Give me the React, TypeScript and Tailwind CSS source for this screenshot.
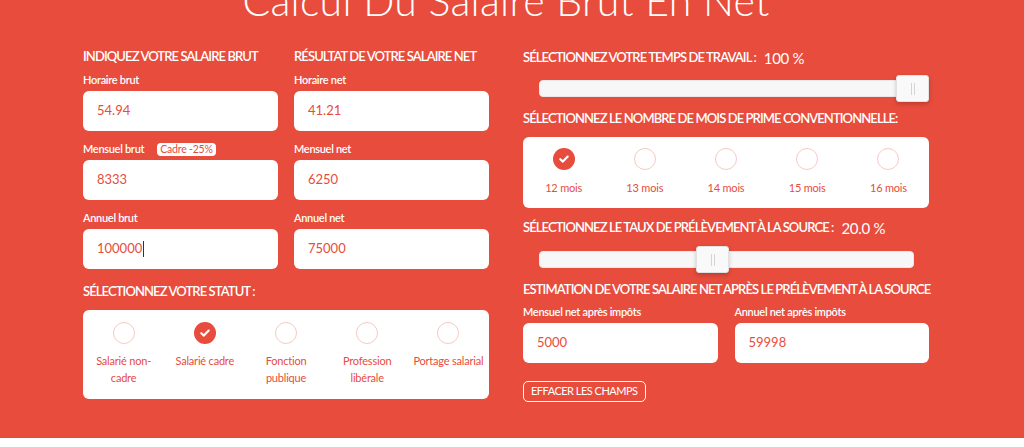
import React from 'react';

const font = { fontFamily: 'Lato, "Noto Sans", sans-serif' };

function Check() {
  return (
    <div className="w-[22px] h-[22px] rounded-full bg-[#e74c3c] flex items-center justify-center">
      <svg width="12" height="12" viewBox="0 0 12 12" fill="none">
        <path d="M2.3 6.2 L4.9 8.6 L9.7 3.6" stroke="white" strokeWidth="2.2" strokeLinecap="round" strokeLinejoin="round" />
      </svg>
    </div>
  );
}

function Circle() {
  return <div className="w-[22px] h-[22px] rounded-full border-[1.5px] border-[#f7cac3] bg-white" />;
}

function Field({ label, value, badge, caret }: { label: string; value: string; badge?: string; caret?: boolean }) {
  return (
    <div className="flex flex-col">
      <div className="h-[18px] flex items-center text-[11px] font-semibold text-white tracking-[-0.3px]">
        {label}
        {badge && (
          <span className="ml-[13px] bg-white text-[#e74c3c] rounded-[4px] px-[3px] h-[13px] leading-[13px] text-[10.5px] font-normal tracking-[-0.2px]">
            {badge}
          </span>
        )}
      </div>
      <div className="mt-[2px] h-[40px] bg-white rounded-[6px] flex items-center pl-[14px] text-[13px] text-[#e74c3c]">
        {value}
        {caret && <span className="w-px h-[16px] bg-[#333] ml-[1px]" />}
      </div>
    </div>
  );
}

function Heading({ children, className = '' }: { children: React.ReactNode; className?: string }) {
  return (
    <div className={`h-[20px] flex items-center text-[13px] font-semibold text-white uppercase tracking-[-0.9px] whitespace-nowrap ${className}`}>
      {children}
    </div>
  );
}

function Slider({ left }: { left: number }) {
  return (
    <div className="relative h-[27px] mr-[15px] ml-[16px]">
      <div className="absolute left-0 right-0 top-[5px] h-[17px] bg-[#f7f7f7] rounded-[4px] border border-[#e9e9e9]" />
      <div
        className="absolute top-0 w-[33px] h-[27px] bg-[#f9f9f9] rounded-[3px] border border-[#e2e2e2] shadow-[0_2px_4px_rgba(0,0,0,0.2)] flex items-center justify-center gap-[2px]"
        style={{ left }}
      >
        <span className="w-px h-[12px] bg-[#d4d4d4]" />
        <span className="w-px h-[12px] bg-[#d4d4d4]" />
      </div>
    </div>
  );
}

const statuts = [
  { label: 'Salarié non-\ncadre', on: false },
  { label: 'Salarié cadre', on: true },
  { label: 'Fonction\npublique', on: false },
  { label: 'Profession\nlibérale', on: false },
  { label: 'Portage salarial', on: false },
];

const mois = ['12 mois', '13 mois', '14 mois', '15 mois', '16 mois'];

export default function App() {
  return (
    <div style={font} className="w-[1024px] h-[447px] bg-white overflow-hidden">
      <div className="h-[438px] bg-[#e74c3c] flex flex-col items-center">
        {/* Title */}
        <h1 className="mt-[-20px] h-[41px] leading-[41px] text-[41px] font-light text-white tracking-[0.3px] ml-[-12px] whitespace-nowrap">
          Calcul Du Salaire Brut En Net
        </h1>

        <div className="mt-[26px] flex gap-[34px] ml-[-12px]">
          {/* Left column */}
          <div className="w-[406px] flex flex-col">
            <div className="grid grid-cols-2 gap-x-[16px]">
              <Heading>Indiquez votre salaire brut</Heading>
              <Heading>Résultat de votre salaire net</Heading>
            </div>
            <div className="mt-[4px] grid grid-cols-2 gap-x-[16px] gap-y-[9px]">
              <Field label="Horaire brut" value="54.94" />
              <Field label="Horaire net" value="41.21" />
              <Field label="Mensuel brut" value="8333" badge="Cadre -25%" />
              <Field label="Mensuel net" value="6250" />
              <Field label="Annuel brut" value="100000" caret />
              <Field label="Annuel net" value="75000" />
            </div>
            <Heading className="mt-[13px]">Sélectionnez votre statut :</Heading>
            <div className="mt-[8px] h-[89px] bg-white rounded-[6px] grid grid-cols-5 pt-[12px]">
              {statuts.map((s) => (
                <div key={s.label} className="flex flex-col items-center">
                  {s.on ? <Check /> : <Circle />}
                  <div className="mt-[8px] text-[11px] leading-[17px] tracking-[-0.2px] text-[#e74c3c] text-center whitespace-pre-line">
                    {s.label}
                  </div>
                </div>
              ))}
            </div>
          </div>

          {/* Right column */}
          <div className="w-[406px] flex flex-col">
            <Heading className="mt-[1px]">
              Sélectionnez votre temps de travail :<span className="ml-[8px] text-[15px] font-normal tracking-[-0.3px]">100 %</span>
            </Heading>
            <div className="mt-[7px]">
              <Slider left={357} />
            </div>
            <Heading className="mt-[7px]">Sélectionnez le nombre de mois de prime conventionnelle:</Heading>
            <div className="mt-[8px] h-[71px] bg-white rounded-[6px] grid grid-cols-5 pt-[11px]">
              {mois.map((m, i) => (
                <div key={m} className="flex flex-col items-center">
                  {i === 0 ? <Check /> : <Circle />}
                  <div className="mt-[9px] text-[11px] leading-[17px] tracking-[-0.2px] text-[#e74c3c]">{m}</div>
                </div>
              ))}
            </div>
            <Heading className="mt-[10px]">
              Sélectionnez le taux de prélèvement à la source :<span className="ml-[8px] text-[15px] font-normal tracking-[-0.3px]">20.0 %</span>
            </Heading>
            <div className="mt-[8px]">
              <Slider left={157} />
            </div>
            <Heading className="mt-[7px]">Estimation de votre salaire net après le prélèvement à la source</Heading>
            <div className="mt-[3px] grid grid-cols-2 gap-x-[17px]">
              <Field label="Mensuel net après impôts" value="5000" />
              <Field label="Annuel net après impôts" value="59998" />
            </div>
            <div className="mt-[14px]">
              <button className="h-[21px] px-[7px] border border-white rounded-[5px] text-[11px] text-white uppercase tracking-[-0.5px]">
                Effacer les champs
              </button>
            </div>
          </div>
        </div>
      </div>
    </div>
  );
}
